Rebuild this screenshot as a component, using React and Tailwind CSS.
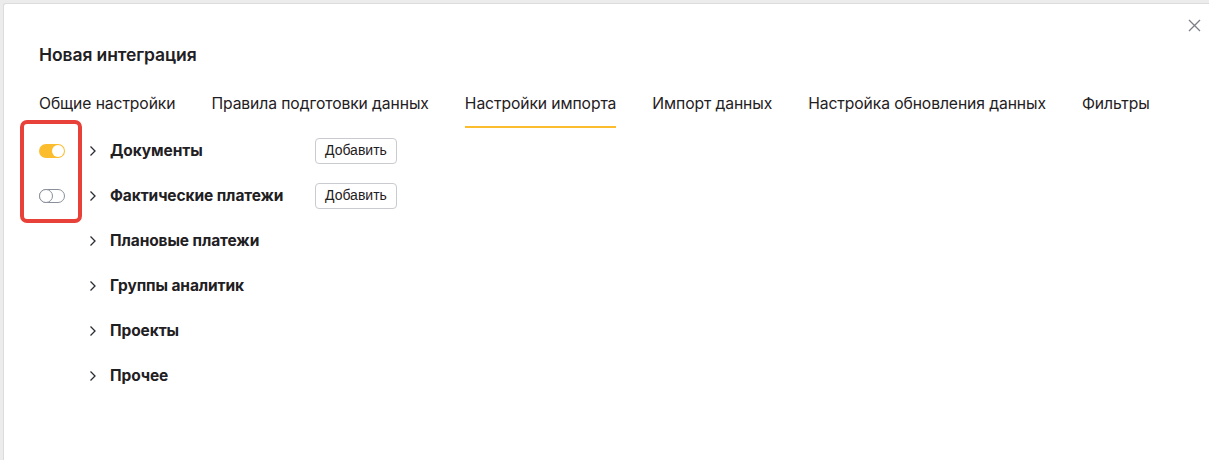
import React from "react";

const tabs = [
  "Общие настройки",
  "Правила подготовки данных",
  "Настройки импорта",
  "Импорт данных",
  "Настройка обновления данных",
  "Фильтры",
];

const rows = [
  { label: "Документы", toggle: "on", add: true },
  { label: "Фактические платежи", toggle: "off", add: true },
  { label: "Плановые платежи" },
  { label: "Группы аналитик" },
  { label: "Проекты" },
  { label: "Прочее" },
];

function Toggle({ on }) {
  if (on) {
    return (
      <div className="flex h-[14px] w-[26px] items-center justify-end rounded-full bg-[#fbbd2e] pr-[1px]">
        <div className="h-[12px] w-[12px] rounded-full bg-white" />
      </div>
    );
  }
  return (
    <div className="flex h-[14px] w-[26px] items-center rounded-full border border-[#8a8f9c] bg-white">
      <div className="h-[14px] w-[14px] -ml-[1px] rounded-full border border-[#8a8f9c] bg-white" />
    </div>
  );
}

function Chevron() {
  return (
    <svg width="8" height="12" viewBox="0 0 8 12" fill="none">
      <path d="M1.5 1.5L6 6L1.5 10.5" stroke="#2a2d33" strokeWidth="1.3" />
    </svg>
  );
}

export default function App() {
  return (
    <div
      className="h-[460px] w-[1209px] overflow-hidden bg-[#ececec] pl-[3px] pt-[3px]"
      style={{ fontFamily: "Inter, 'Noto Sans', sans-serif" }}
    >
      <div className="relative h-[470px] w-[1220px] rounded-tl-[3px] border-l border-t border-[#dcdcdc] bg-white pl-[35px] text-[#1f2023]">
        <button className="absolute left-[1180px] top-[11px] flex h-[20px] w-[20px] items-center justify-center">
          <svg width="13" height="13" viewBox="0 0 13 13">
            <path d="M1 1L12 12M12 1L1 12" stroke="#7b7f88" strokeWidth="1.3" />
          </svg>
        </button>
        <div className="pt-[39px] text-[17.5px] font-semibold leading-[24px] tracking-[-0.1px]">
          Новая интеграция
        </div>
        <div className="mt-[26px] flex gap-[36px] text-[15.7px] leading-[20px] tracking-[-0.1px]">
          {tabs.map((t, i) => (
            <div
              key={t}
              className={
                "pb-[12px] pt-[1px] border-b-2 " +
                (i === 2 ? "border-[#fbbd2e]" : "border-transparent")
              }
            >
              {t}
            </div>
          ))}
        </div>
        <div className="mt-0 flex flex-col">
          {rows.map((r) => (
            <div key={r.label} className="flex h-[45px] items-center">
              <div className="flex w-[50px] items-center">
                {r.toggle ? <Toggle on={r.toggle === "on"} /> : null}
              </div>
              <div className="flex w-[21px] items-center">
                <Chevron />
              </div>
              <div className="w-[205px] text-[15.5px] font-bold leading-[20px] tracking-[-0.1px]">
                {r.label}
              </div>
              {r.add ? (
                <button
                  className="h-[26px] rounded-[4px] border border-[#c9cbd0] bg-white px-[9px] text-[14px] text-[#1f2023]"
                  style={{ fontFamily: "'Liberation Sans', Arial, sans-serif" }}
                >
                  Добавить
                </button>
              ) : null}
            </div>
          ))}
        </div>
        <div className="absolute left-[16px] top-[116px] h-[103px] w-[62px] rounded-[7px] border-[4px] border-[#e8413a]" />
      </div>
    </div>
  );
}
